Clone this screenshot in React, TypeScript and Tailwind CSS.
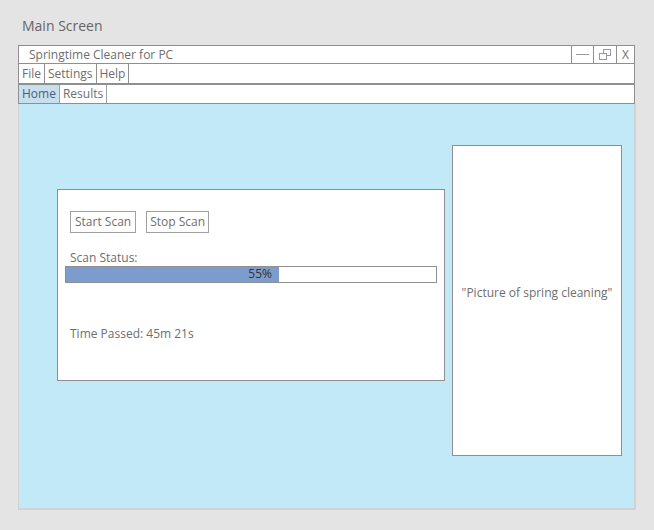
const font = { fontFamily: '"Open Sans", "Noto Sans", sans-serif' };

function WinButton({ children }: { children: React.ReactNode }) {
  return (
    <div className="flex h-full items-center justify-center border-l border-[#8f8f8f]">
      {children}
    </div>
  );
}

export default function App() {
  return (
    <div
      style={font}
      className="h-[530px] w-[654px] bg-[#e4e4e4] pl-[18px] pt-[16px] text-[12px] text-[#6e6e6e]"
    >
      <div className="mb-[9px] pl-[4px] text-[14px] leading-[20px] text-[#666]">Main Screen</div>

      <div className="w-[618px]">
        {/* title bar */}
        <div className="flex h-[19px] w-[617px] items-center border border-[#8f8f8f] bg-white">
          <div className="flex-1 pl-[10px] leading-[17px]">Springtime Cleaner for PC</div>
          <div className="flex h-full">
            <WinButton>
              <div className="w-[21px]">
                <div className="mx-auto h-px w-[13px] bg-[#9a9a9a]" />
              </div>
            </WinButton>
            <WinButton>
              <svg width="22" height="17" viewBox="0 0 22 17" fill="none" stroke="#9a9a9a" strokeWidth="1">
                <rect x="9.5" y="3.5" width="7" height="6" />
                <rect x="5.5" y="7.5" width="7" height="6" fill="white" />
              </svg>
            </WinButton>
            <WinButton>
              <div className="w-[17px] text-center text-[12px] leading-[17px]">X</div>
            </WinButton>
          </div>
        </div>

        {/* menu bar */}
        <div className="flex h-[20px] w-[617px] border border-t-0 border-[#8f8f8f] bg-white leading-[19px]">
          <div className="border-r border-[#8f8f8f] px-[3px]">File</div>
          <div className="border-r border-[#8f8f8f] px-[3px]">Settings</div>
          <div className="border-r border-[#8f8f8f] px-[3px]">Help</div>
        </div>

        {/* tab bar */}
        <div className="flex h-[20px] w-[617px] border border-[#8f8f8f] bg-white leading-[18px]">
          <div className="border-r border-[#a0a0a0] bg-[#c8dff0] px-[3px] text-[#4d5f70]">Home</div>
          <div className="border-r border-[#a0a0a0] px-[3px]">Results</div>
        </div>

        {/* content */}
        <div className="flex h-[406px] items-start border-r-[2px] border-b-[2px] border-l border-[#d2d2d2] bg-[#c2e9f7] pl-[38px]">
          <div className="mt-[85px] h-[192px] w-[388px] border border-[#8f8f8f] bg-white pl-[12px] pt-[21px]">
            <div className="flex gap-[10px]">
              <div className="flex h-[22px] items-center border border-[#a0a0a0] px-[4px]">Start Scan</div>
              <div className="flex h-[22px] items-center border border-[#a0a0a0] px-[3px]">Stop Scan</div>
            </div>
            <div className="mt-[16px] leading-[17px]">Scan Status:</div>
            <div className="ml-[-5px] mt-0 flex h-[17px] w-[372px] border border-[#8f8f8f] bg-white">
              <div className="h-full w-[213px] bg-[#7b9ccc] pr-[7px] text-right leading-[14px] text-[#333]">
                55%
              </div>
            </div>
            <div className="mt-[42px] leading-[17px]">Time Passed: 45m 21s</div>
          </div>

          <div className="ml-[7px] mt-[41px] flex h-[311px] w-[170px] items-center justify-center border border-[#8f8f8f] bg-white pb-[16px]">
            "Picture of spring cleaning"
          </div>
        </div>
      </div>
    </div>
  );
}
